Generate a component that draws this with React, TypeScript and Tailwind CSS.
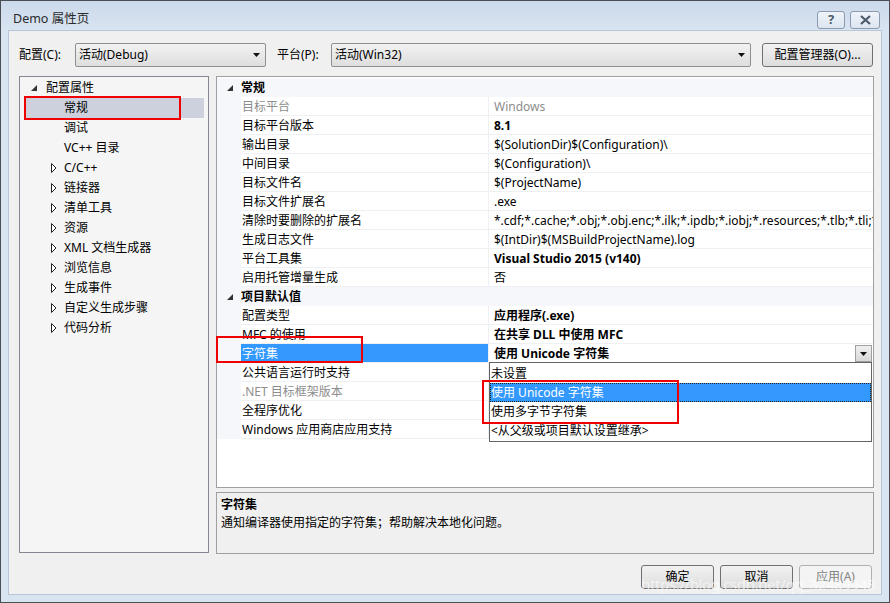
import React from "react";

const font = { fontFamily: '"Noto Sans", "Noto Sans CJK SC", sans-serif' };

type Row = { name: string; value: string; bold?: boolean; dim?: boolean };

const general: Row[] = [
  { name: "目标平台", value: "Windows", dim: true },
  { name: "目标平台版本", value: "8.1", bold: true },
  { name: "输出目录", value: "$(SolutionDir)$(Configuration)\\" },
  { name: "中间目录", value: "$(Configuration)\\" },
  { name: "目标文件名", value: "$(ProjectName)" },
  { name: "目标文件扩展名", value: ".exe" },
  {
    name: "清除时要删除的扩展名",
    value: "*.cdf;*.cache;*.obj;*.obj.enc;*.ilk;*.ipdb;*.iobj;*.resources;*.tlb;*.tli;*.tlh;*.tmp;*.rsp",
  },
  { name: "生成日志文件", value: "$(IntDir)$(MSBuildProjectName).log" },
  { name: "平台工具集", value: "Visual Studio 2015 (v140)", bold: true },
  { name: "启用托管增量生成", value: "否" },
];

const defaults: Row[] = [
  { name: "配置类型", value: "应用程序(.exe)", bold: true },
  { name: "MFC 的使用", value: "在共享 DLL 中使用 MFC", bold: true },
  { name: "字符集", value: "使用 Unicode 字符集", bold: true },
  { name: "公共语言运行时支持", value: "" },
  { name: ".NET 目标框架版本", value: "", dim: true },
  { name: "全程序优化", value: "" },
  { name: "Windows 应用商店应用支持", value: "" },
];

const treeItems = [
  "C/C++",
  "链接器",
  "清单工具",
  "资源",
  "XML 文档生成器",
  "浏览信息",
  "生成事件",
  "自定义生成步骤",
  "代码分析",
];

const Expanded = () => (
  <svg width="7" height="7" viewBox="0 0 7 7">
    <path d="M6 0 L6 6 L0 6 Z" fill="#333" />
  </svg>
);

const Collapsed = () => (
  <svg width="6" height="10" viewBox="0 0 6 10">
    <path d="M0.5 0.5 L5 5 L0.5 9.5 Z" fill="white" stroke="#222" strokeWidth="1" />
  </svg>
);

const ArrowDown = () => (
  <svg width="7" height="4" viewBox="0 0 7 4">
    <path d="M0 0 L7 0 L3.5 4 Z" fill="#111" />
  </svg>
);

const Combo = ({ text, className }: { text: string; className: string }) => (
  <div
    className={`flex h-[24px] items-center justify-between rounded-[2px] border border-[#8e8f8f] bg-gradient-to-b from-[#f2f2f2] to-[#dedede] pl-[3px] pr-[5px] ${className}`}
  >
    <span>{text}</span>
    <ArrowDown />
  </div>
);

const Button = ({ text, disabled }: { text: string; disabled?: boolean }) => (
  <div
    className={`flex h-[24px] w-[73px] items-center justify-center rounded-[3px] border ${
      disabled
        ? "border-[#adb2b5] bg-[#f4f4f4] text-[#838383]"
        : "border-[#707070] bg-gradient-to-b from-[#f2f2f2] to-[#dddddd] text-black"
    }`}
  >
    {text}
  </div>
);

const Category = ({ title }: { title: string }) => (
  <div className="flex h-[19px] items-center bg-[#f5f7fb] pt-[1px]">
    <div className="flex w-[24px] justify-center pl-[2px]">
      <Expanded />
    </div>
    <span className="font-bold">{title}</span>
  </div>
);

const PropRow = ({ row, selected }: { row: Row; selected?: boolean }) => (
  <div className="flex h-[19px]">
    <div className="w-[24px] shrink-0 bg-[#f5f7fb]" />
    <div
      className={`flex w-[248px] shrink-0 items-center border-b border-r border-[#eef0f4] pl-[1px] pt-[1px] ${
        selected ? "bg-[#3399ff] text-white" : row.dim ? "text-[#8d8d8d]" : ""
      }`}
    >
      {row.name}
    </div>
    <div
      className={`relative flex min-w-0 flex-1 items-center overflow-hidden whitespace-nowrap border-b border-[#eef0f4] pl-[5px] pt-[1px] ${
        row.bold ? "font-bold" : ""
      } ${row.dim ? "text-[#8d8d8d]" : ""}`}
    >
      {row.value}
      {selected && (
        <div className="absolute right-[1px] top-[1px] flex h-[17px] w-[17px] items-center justify-center border border-[#a0a0a0] bg-gradient-to-b from-[#f0f0f0] to-[#d8d8d8]">
          <ArrowDown />
        </div>
      )}
    </div>
  </div>
);

export default function App() {
  return (
    <div
      className="relative flex h-[603px] w-[890px] flex-col border border-[#4a4f55] bg-[#d9e4f1] text-[12px] text-black"
      style={font}
    >
      {/* title bar */}
      <div className="flex h-[29px] shrink-0 items-center justify-between bg-gradient-to-b from-[#cbd9ea] to-[#d9e4f1] pl-[12px] pr-[9px]">
        <span className="mt-[7px] text-[12.5px] text-[#2a2a2a]">Demo 属性页</span>
        <div className="mt-[8px] flex gap-[5px]">
          <div className="flex h-[18px] w-[28px] items-center justify-center rounded-[3px] border border-[#8a9ab0] bg-gradient-to-b from-[#f0f4fa] to-[#dce5f0] text-[13px] font-bold leading-none text-[#4d5a6b]">
            ?
          </div>
          <div className="flex h-[18px] w-[30px] items-center justify-center rounded-[3px] border border-[#8a9ab0] bg-gradient-to-b from-[#f0f4fa] to-[#dce5f0]">
            <svg width="11" height="10" viewBox="0 0 11 10">
              <path d="M1 1 L10 9 M10 1 L1 9" stroke="#4d5a6b" strokeWidth="2.2" />
            </svg>
          </div>
        </div>
      </div>

      {/* client */}
      <div className="mx-[7px] mb-[7px] flex flex-1 flex-col border border-[#b7c6d8] bg-[#f0f0f0] pl-[10px] pr-[7px] pt-[12px]">
        <div className="flex h-[24px] items-center">
          <span className="w-[56px]">配置(C):</span>
          <Combo text="活动(Debug)" className="w-[191px]" />
          <span className="ml-[11px] w-[54px]">平台(P):</span>
          <Combo text="活动(Win32)" className="w-[420px]" />
          <div className="ml-[11px] flex h-[24px] w-[111px] items-center justify-center rounded-[3px] border border-[#707070] bg-gradient-to-b from-[#f2f2f2] to-[#dddddd]">
            配置管理器(O)...
          </div>
        </div>

        <div className="mt-[9px] flex gap-[7px]">
          {/* tree */}
          <div className="h-[477px] w-[190px] shrink-0 border border-[#828790] bg-[#f5f5f5] pt-[1px]">
            <div className="flex h-[20px] items-center">
              <div className="ml-[11px] w-[14px]">
                <Expanded />
              </div>
              <span className="ml-[1px]">配置属性</span>
            </div>
            <div className="mx-[4px] flex h-[20px] items-center bg-[#cdd1dd] pl-[40px]">常规</div>
            <div className="flex h-[20px] items-center pl-[44px]">调试</div>
            <div className="flex h-[20px] items-center pl-[44px]">VC++ 目录</div>
            {treeItems.map((t) => (
              <div key={t} className="flex h-[20px] items-center">
                <div className="ml-[31px] w-[13px]">
                  <Collapsed />
                </div>
                <span>{t}</span>
              </div>
            ))}
          </div>

          {/* right column */}
          <div className="flex min-w-0 flex-1 flex-col">
            <div className="h-[412px] border border-[#a0a0a0] bg-white pt-[1px]">
              <Category title="常规" />
              {general.map((r) => (
                <PropRow key={r.name} row={r} />
              ))}
              <Category title="项目默认值" />
              {defaults.map((r, i) => (
                <div key={r.name} className="relative">
                  <PropRow row={r} selected={i === 2} />
                  {i === 2 && (
                    <div className="absolute left-[272px] right-[1px] top-[18px] z-10 flex h-[80px] flex-col border border-[#646464] bg-white pt-[1px]">
                      <div className="flex h-[19px] items-center pl-[1px]">未设置</div>
                      <div className="flex h-[19px] items-center border border-dotted border-[#222] bg-[#3399ff] text-white">
                        使用 Unicode 字符集
                      </div>
                      <div className="flex h-[19px] items-center pl-[1px]">使用多字节字符集</div>
                      <div className="flex h-[19px] items-center pl-[1px]">&lt;从父级或项目默认设置继承&gt;</div>
                    </div>
                  )}
                </div>
              ))}
            </div>

            <div className="mt-[4px] flex h-[62px] flex-col border border-[#a0a0a0] bg-[#f0f0f0] px-[4px] pt-[3px]">
              <span className="font-bold leading-[18px]">字符集</span>
              <span className="leading-[18px]">通知编译器使用指定的字符集；帮助解决本地化问题。</span>
            </div>
          </div>
        </div>

        <div className="mt-[11px] flex justify-end gap-[6px] pr-[2px]">
          <Button text="确定" />
          <Button text="取消" />
          <Button text="应用(A)" disabled />
        </div>
      </div>

      {/* annotations */}
      <div className="pointer-events-none absolute left-[23px] top-[95px] z-20 h-[24px] w-[157px] border-2 border-[#f00000]" />
      <div className="pointer-events-none absolute left-[215px] top-[335px] z-20 h-[27px] w-[147px] border-2 border-[#f00000]" />
      <div className="pointer-events-none absolute left-[481px] top-[379px] z-20 h-[44px] w-[197px] border-2 border-[#f00000]" />
      <div className="pointer-events-none absolute left-[640px] top-[572px] z-20 text-[15px] tracking-tight text-white/60">
        https://blog.csdn.net/qq_32489948
      </div>
    </div>
  );
}
